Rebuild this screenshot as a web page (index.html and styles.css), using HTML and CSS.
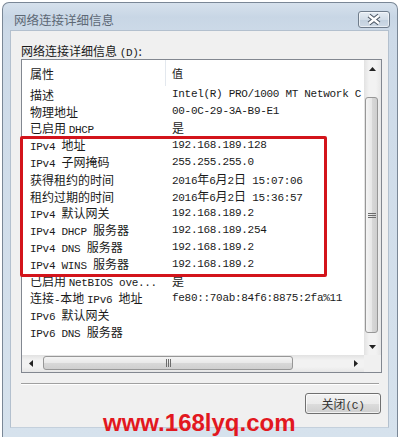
FILE: index.html
```html
<!DOCTYPE html>
<html lang="zh-CN">
<head>
  <meta charset="UTF-8" />
  <title>网络连接详细信息</title>
  <link rel="stylesheet" href="styles.css">
</head>
<body>

<div class="screen">
  <div class="window">

    <!-- title bar -->
    <div class="titlebar">
      <span class="title">网络连接详细信息</span>
      <span class="close-x">
        <svg width="30" height="15" viewBox="0 0 30 15">
          <path d="M10 3.5 L20 11.5 M20 3.5 L10 11.5" stroke="#4a5563" stroke-width="4.4" fill="none"/>
          <path d="M10 3.5 L20 11.5 M20 3.5 L10 11.5" stroke="#ffffff" stroke-width="2.4" fill="none"/>
        </svg>
      </span>
    </div>

    <div class="client">
      <div class="label">网络连接详细信息 <span class="m">(D)</span>:</div>

      <div class="listview">
        <div class="list-body">
          <div class="list-header">
            <div class="c1">属性</div>
            <div class="c2 zh">值</div>
          </div>
          <div class="row"><div class="c1">描述</div><div class="c2">Intel(R) PRO/1000 MT Network C</div></div>
          <div class="row"><div class="c1">物理地址</div><div class="c2">00-0C-29-3A-B9-E1</div></div>
          <div class="row"><div class="c1">已启用 <span class="m">DHCP</span></div><div class="c2"><span class="zh">是</span></div></div>
          <div class="row"><div class="c1"><span class="m">IPv4 </span>地址</div><div class="c2">192.168.189.128</div></div>
          <div class="row"><div class="c1"><span class="m">IPv4 </span>子网掩码</div><div class="c2">255.255.255.0</div></div>
          <div class="row"><div class="c1">获得租约的时间</div><div class="c2">2016<span class="zh">年</span>6<span class="zh">月</span>2<span class="zh">日</span> 15:07:06</div></div>
          <div class="row"><div class="c1">租约过期的时间</div><div class="c2">2016<span class="zh">年</span>6<span class="zh">月</span>2<span class="zh">日</span> 15:36:57</div></div>
          <div class="row"><div class="c1"><span class="m">IPv4 </span>默认网关</div><div class="c2">192.168.189.2</div></div>
          <div class="row"><div class="c1"><span class="m">IPv4 DHCP </span>服务器</div><div class="c2">192.168.189.254</div></div>
          <div class="row"><div class="c1"><span class="m">IPv4 DNS </span>服务器</div><div class="c2">192.168.189.2</div></div>
          <div class="row"><div class="c1"><span class="m">IPv4 WINS </span>服务器</div><div class="c2">192.168.189.2</div></div>
          <div class="row"><div class="c1">已启用 <span class="m">NetBIOS ove...</span></div><div class="c2"><span class="zh">是</span></div></div>
          <div class="row"><div class="c1">连接<span class="m">-</span>本地 <span class="m">IPv6 </span>地址</div><div class="c2">fe80::70ab:84f6:8875:2fa%11</div></div>
          <div class="row"><div class="c1"><span class="m">IPv6 </span>默认网关</div><div class="c2"></div></div>
          <div class="row"><div class="c1"><span class="m">IPv6 DNS </span>服务器</div><div class="c2"></div></div>
        </div>

        <!-- vertical scrollbar -->
        <div class="vscroll">
          <div class="arrow">
            <svg width="7" height="4" viewBox="0 0 7 4"><path d="M0 4 L3.5 0 L7 4 Z" fill="#222"/></svg>
          </div>
          <div class="vtrack">
            <div class="vthumb">
              <svg width="8" height="7" viewBox="0 0 8 7"><path d="M0 1.5 H8 M0 3.5 H8 M0 5.5 H8" stroke="#6b6b6b" stroke-width="1"/></svg>
            </div>
          </div>
          <div class="arrow">
            <svg width="7" height="4" viewBox="0 0 7 4"><path d="M0 0 L3.5 4 L7 0 Z" fill="#222"/></svg>
          </div>
        </div>

        <!-- horizontal scrollbar -->
        <div class="hscroll">
          <div class="arrow">
            <svg width="4" height="7" viewBox="0 0 4 7"><path d="M4 0 L0 3.5 L4 7 Z" fill="#222"/></svg>
          </div>
          <div class="htrack">
            <div class="hthumb">
              <svg width="7" height="8" viewBox="0 0 7 8"><path d="M1.5 0 V8 M3.5 0 V8 M5.5 0 V8" stroke="#6b6b6b" stroke-width="1"/></svg>
            </div>
          </div>
          <div class="arrow">
            <svg width="4" height="7" viewBox="0 0 4 7"><path d="M0 0 L4 3.5 L0 7 Z" fill="#222"/></svg>
          </div>
        </div>
        <div class="corner"></div>
      </div>

      <div class="sep"></div>

      <div class="actions">
        <button class="btn">关闭<span class="m">(C)</span></button>
      </div>
    </div>
  </div>

  <!-- overlays -->
  <div class="highlight"></div>
  <div class="watermark">www.168lyq.com</div>
</div>

</body>
</html>
```

FILE: styles.css
```css
body {
  margin: 0;
  background: #fff;
  font-family: "Noto Sans CJK SC", sans-serif;
}
.screen {
  position: relative;
  width: 400px;
  height: 437px;
  overflow: hidden;
}
.window {
  box-sizing: border-box;
  width: 396px;
  height: 435px;
  margin: 2px 0 0 2px;
  border: 1px solid #7a8796;
  border-bottom: none;
  border-radius: 7px 7px 0 0;
  background: linear-gradient(#d6e1ec 0, #c8d6e5 14px, #cddae8 30px, #d6e2ed 100%);
  padding: 0 7px 8px 7px;
  display: flex;
  flex-direction: column;
}
.titlebar {
  height: 27px;
  box-sizing: border-box;
  padding: 5px 0 0 4px;
  display: flex;
  align-items: center;
  justify-content: space-between;
}
.title {
  font-size: 12.5px;
  color: #5d6875;
}
.close-x {
  box-sizing: border-box;
  width: 32px;
  height: 17px;
  border: 1px solid #6f7c8b;
  border-radius: 3px;
  background: linear-gradient(#e6edf4 0, #d3dde8 50%, #c2d0de 51%, #cfdae6 100%);
  box-shadow: inset 0 0 0 1px rgba(255, 255, 255, 0.55);
  display: flex;
  align-items: center;
  justify-content: center;
}
.close-x svg {
  display: block;
}
.client {
  box-sizing: border-box;
  width: 379px;
  height: 398px;
  background: #f0f0f0;
  border: 1px solid #b3c0ce;
  border-bottom-color: #c4d0dc;
  padding: 11px 6px 0 10px;
}
.label {
  height: 17px;
  line-height: 17px;
  font-size: 12px;
  color: #1a1a1a;
}
.m {
  font-family: "Liberation Mono", monospace;
  font-size: 11px;
  letter-spacing: -0.3px;
}
.zh {
  font-family: "Noto Sans CJK SC", sans-serif;
  font-size: 12px;
  letter-spacing: 0;
}

/* list view */
.listview {
  box-sizing: border-box;
  height: 314px;
  border: 1px solid #828790;
  background: #fff;
  display: grid;
  grid-template-columns: 1fr 17px;
  grid-template-rows: 1fr 17px;
}
.list-body {
  overflow: hidden;
  white-space: nowrap;
  color: #1a1a1a;
}
.list-header {
  display: flex;
  height: 26px;
  align-items: center;
  font-size: 12px;
}
.list-header .c1 {
  align-self: stretch;
  display: flex;
  align-items: center;
  border-right: 1px solid #e3e8ee;
}
.row {
  display: flex;
  height: 17px;
  line-height: 17px;
  align-items: center;
}
.c1 {
  box-sizing: border-box;
  width: 144px;
  flex: none;
  padding-left: 8px;
  font-size: 12px;
}
.c2 {
  padding-left: 6px;
  font-family: "Liberation Mono", monospace;
  font-size: 11px;
  letter-spacing: -0.3px;
}

/* scrollbars */
.vscroll {
  grid-row: 1;
  grid-column: 2;
  display: flex;
  flex-direction: column;
  background: linear-gradient(90deg, #e2e2e2 0, #f2f2f2 30%, #f2f2f2 70%, #e6e6e6 100%);
}
.hscroll {
  grid-row: 2;
  grid-column: 1;
  display: flex;
  background: linear-gradient(#e2e2e2 0, #f2f2f2 30%, #f2f2f2 70%, #e6e6e6 100%);
}
.corner {
  background: #f0f0f0;
}
.arrow {
  width: 17px;
  height: 17px;
  flex: none;
  display: flex;
  align-items: center;
  justify-content: center;
}
.vtrack {
  flex: 1;
  display: flex;
  flex-direction: column;
  padding: 20px 0 5px 1px;
}
.vthumb {
  flex: 1;
  width: 13px;
  box-sizing: border-box;
  border: 1px solid #979797;
  border-radius: 3px;
  background: linear-gradient(90deg, #f4f4f4 0, #e8e8e8 50%, #d8d8d8 51%, #cfcfcf 100%);
  display: flex;
  align-items: center;
  justify-content: center;
}
.htrack {
  flex: 1;
  display: flex;
  padding: 1px 0 0 4px;
}
.hthumb {
  width: 250px;
  height: 14px;
  box-sizing: border-box;
  border: 1px solid #979797;
  border-radius: 3px;
  background: linear-gradient(#f4f4f4 0, #e8e8e8 50%, #d8d8d8 51%, #cfcfcf 100%);
  display: flex;
  align-items: center;
  justify-content: center;
}
.sep {
  margin: 10px 3px 0 0;
  border-top: 1px solid #a0a0a0;
  border-bottom: 1px solid #fff;
}
.actions {
  display: flex;
  justify-content: flex-end;
  margin-top: 8px;
  padding-right: 1px;
}
.btn {
  width: 76px;
  height: 21px;
  padding: 0;
  border: 1px solid #707070;
  border-radius: 3px;
  background: linear-gradient(#f2f2f2 0, #ebebeb 50%, #dddddd 51%, #cfcfcf 100%);
  box-shadow: inset 0 0 0 1px rgba(255, 255, 255, 0.7);
  font-family: "Noto Sans CJK SC", sans-serif;
  font-size: 12px;
  color: #333;
}

/* overlays */
.highlight {
  position: absolute;
  left: 20px;
  top: 136px;
  width: 307px;
  height: 141px;
  box-sizing: border-box;
  border: 3px solid #d3141b;
  border-radius: 2px;
}
.watermark {
  position: absolute;
  left: 103px;
  top: 411px;
  font-family: "Liberation Sans", Arial, sans-serif;
  font-weight: bold;
  font-size: 24px;
  line-height: 24px;
  color: #e2181f;
}
```
